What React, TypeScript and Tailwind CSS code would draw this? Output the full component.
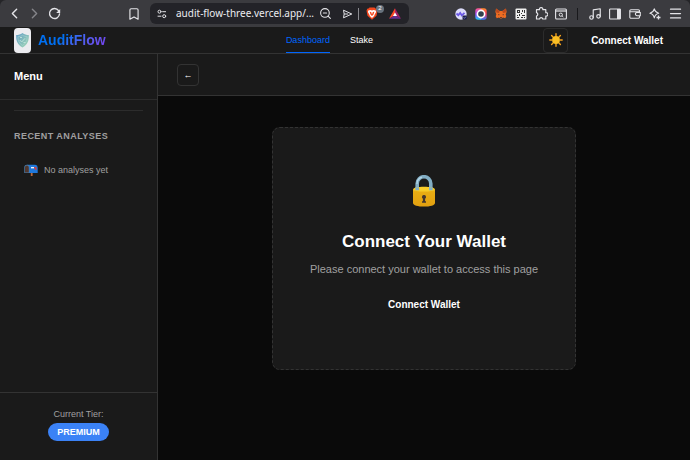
import type { ReactNode } from "react";
import { Bookmark, ChevronLeft, ChevronRight, Menu, Music, ZoomOut } from "lucide-react";

const NAV_LINKS = [
  { label: "Dashboard", active: true },
  { label: "Stake", active: false },
];

function ToolButton({ label, children }: { label: string; children: ReactNode }) {
  return (
    <button aria-label={label} className="flex h-5 w-5 shrink-0 items-center justify-center text-[#e4e4e8]">
      {children}
    </button>
  );
}

function ReloadIcon() {
  return (
    <svg width="13" height="13" viewBox="0 0 13 13" fill="none">
      <path d="M10.6 3.6A5 5 0 1 0 11.5 7" stroke="currentColor" strokeWidth="1.4" strokeLinecap="round" />
      <path d="M12.2 2v4H8.2z" fill="currentColor" />
    </svg>
  );
}

function TuneIcon() {
  return (
    <svg width="10" height="10" viewBox="0 0 10 10" fill="none" stroke="currentColor" strokeWidth="1" strokeLinecap="round">
      <circle cx="2.5" cy="2.7" r="1.5" />
      <path d="M5.6 2.7h3M1 7.2h3" />
      <circle cx="7.2" cy="7.2" r="1.5" />
    </svg>
  );
}

function SendIcon() {
  return (
    <svg width="11" height="10" viewBox="0 0 11 10" fill="none" stroke="currentColor" strokeWidth="1" strokeLinejoin="round">
      <path d="M1.5 1.2 9.8 5 1.5 8.8 2.2 5z" />
      <path d="M2.2 5h4" />
    </svg>
  );
}

function BraveIcon() {
  return (
    <svg width="12" height="13" viewBox="0 0 12 13">
      <path d="M3.5.5h5l1 1 1.3.2.7 2-1 5L6 12.7 1.5 8.7l-1-5 .7-2 1.3-.2z" fill="#f4481e" />
      <path d="M2.3 3.5 4.5 3 6 3.5 7.5 3l2.2.5.4 1.5-1.4 2.4-.6 1.6L6 10.9 3.9 9l-.6-1.6L1.9 5z" fill="#fff" />
      <path d="M3.6 4.8 5.2 5 6 7.6 6.8 5l1.6-.2-.9 2.7L6 9 4.5 7.5z" fill="#f4481e" />
    </svg>
  );
}

function RewardsIcon() {
  return (
    <svg width="12" height="11" viewBox="0 0 12 11">
      <path d="M6 .3 0 10.7l6-3.5z" fill="#ff4724" />
      <path d="M6 .3 12 10.7 6 7.2z" fill="#9e1f63" />
      <path d="M0 10.7h12L6 7.2z" fill="#662d91" />
      <path d="M6 4.5 4 8h4z" fill="#fff" />
    </svg>
  );
}

function RabbyIcon() {
  return (
    <svg width="12" height="12" viewBox="0 0 12 12">
      <circle cx="6" cy="6" r="5.7" fill="#dcdcfb" />
      <path d="M1.5 5.5 3.3 7.2 5.2 5l1.6 2.3L9.5 4.8" fill="none" stroke="#6a57e6" strokeWidth="1.8" />
      <rect x="7.5" y="7.5" width="4.3" height="4" rx="1" fill="#1f1f4a" />
      <path d="m8.5 9.5 1 .8 1.3-1.6" fill="none" stroke="#7f90ee" strokeWidth=".7" />
    </svg>
  );
}

function RainbowIcon() {
  return (
    <svg width="12" height="12" viewBox="0 0 12 12">
      <defs>
        <linearGradient id="ringLeft" x1="0" y1="0" x2="0" y2="1">
          <stop offset="0" stopColor="#ff5a8a" />
          <stop offset=".5" stopColor="#a14cff" />
          <stop offset="1" stopColor="#19c8f5" />
        </linearGradient>
        <linearGradient id="ringRight" x1="0" y1="0" x2="0" y2="1">
          <stop offset="0" stopColor="#ff8a2b" />
          <stop offset=".5" stopColor="#ff3c6e" />
          <stop offset="1" stopColor="#2f7bff" />
        </linearGradient>
      </defs>
      <path d="M6 .3H3A2.7 2.7 0 0 0 .3 3v6A2.7 2.7 0 0 0 3 11.7h3z" fill="url(#ringLeft)" />
      <path d="M6 .3h3A2.7 2.7 0 0 1 11.7 3v6A2.7 2.7 0 0 1 9 11.7H6z" fill="url(#ringRight)" />
      <circle cx="6" cy="6" r="4.4" fill="#fff" />
      <circle cx="6" cy="6" r="2.8" fill="#30404c" />
    </svg>
  );
}

function FoxIcon() {
  return (
    <svg width="12" height="11" viewBox="0 0 12 11">
      <path d="M1 .5 4.7 3h2.6L11 .5l.6 3.5-.9 2.3.6 2-1 1.9-2.3-.6-1.4 1H5.4L4 9.6l-2.3.6-1-1.9.6-2L.4 4z" fill="#ec6c22" />
      <path d="M1 .5 4.7 3 4 5 1.2 4.5zM11 .5 7.3 3 8 5l2.8-.5z" fill="#b9481d" />
      <path d="m3.4 6 1.4 1-1.4.2zM8.6 6 7.200 7l1.400.2zM5.200 9.200h1.600l.2.900H5z" fill="#2b2630" />
    </svg>
  );
}

function QrIcon() {
  return (
    <svg width="12" height="12" viewBox="0 0 12 12">
      <rect x=".5" y=".5" width="11" height="11" rx="1" fill="#f0f0f0" />
      <path d="M2 2h3v3H2zM7 2h1v2H7zM9 2h1v3H9zM2 7h1v1H2zM4 6h1v2H4zM6 5h1v1H6zM7 7h3v1H7zM6 9h2v1H6zM9 9h1v1H9zM2 9h2v1H2z" fill="#333" />
      <path d="M3 3h1v1H3z" fill="#f0f0f0" />
    </svg>
  );
}

function PuzzleIcon() {
  return (
    <svg width="13" height="13" viewBox="0 0 13 13" fill="none" stroke="currentColor" strokeWidth="1.2" strokeLinejoin="round">
      <path d="M1.5 2.700h3a1.700 1.700 0 1 1 3.300 0h3v3a1.700 1.700 0 1 1 0 3.300v3h-3a1.700 1.700 0 0 0-3.300 0h-3v-3a1.700 1.700 0 0 0 0-3.300z" />
    </svg>
  );
}

function WindowSearchIcon() {
  return (
    <svg width="12" height="12" viewBox="0 0 12 12" fill="none" stroke="currentColor">
      <rect x=".6" y="1" width="10.8" height="10" rx="1" strokeWidth="1.1" />
      <path d="M1 3h10" strokeWidth="1.2" />
      <circle cx="5.8" cy="6.7" r="1.6" />
      <path d="m7 7.8 1.3 1.2" />
    </svg>
  );
}

function SidePanelIcon() {
  return (
    <svg width="12" height="12" viewBox="0 0 12 12" fill="none">
      <rect x=".6" y="1" width="10.8" height="10" rx=".8" stroke="currentColor" strokeWidth="1.1" />
      <path d="M8 1h3.500v10H8z" fill="currentColor" />
    </svg>
  );
}

function WalletIcon() {
  return (
    <svg width="12" height="12" viewBox="0 0 12 12" fill="none" stroke="currentColor" strokeWidth="1.1">
      <path d="M10.5 4V3a1.200 1.200 0 0 0-1.200-1.300H2A1.200 1.200 0 0 0 .8 3v6A1.200 1.200 0 0 0 2 10.300h7.300A1.200 1.200 0 0 0 10.500 9V8" />
      <path d="M.8 3.700h9.700M11.300 4.500H8a1.600 1.600 0 0 0 0 3.200h3.300z" />
    </svg>
  );
}

function SparkleIcon() {
  return (
    <svg width="12" height="12" viewBox="0 0 12 12" fill="none" stroke="currentColor" strokeLinejoin="round">
      <path d="M5.3.9C5.9 3.5 6.700 4.500 9.700 5.300 6.700 6.100 5.900 7.100 5.300 9.900 4.700 7.100 3.900 6.100.9 5.300 3.900 4.500 4.700 3.500 5.300.9z" strokeWidth="1.1" />
      <path d="M9.500 7.500v4M7.500 9.500h4" strokeWidth="1.300" />
    </svg>
  );
}

function ShieldLogo() {
  return (
    <svg className="h-[25px] w-[17px]" viewBox="0 0 17 25">
      <defs>
        <linearGradient id="shield" x1="0" y1="0" x2="1" y2="1">
          <stop offset="0" stopColor="#5f9bc6" />
          <stop offset="1" stopColor="#a6dcb4" />
        </linearGradient>
      </defs>
      <rect width="17" height="25" rx="4" fill="#ececf0" />
      <path d="M8.500 5c2 1.500 4 2 6.300 2 .3 6-1.500 10-6.300 12.500C3.700 17 1.900 13 2.200 7c2.300 0 4.300-.5 6.300-2z" fill="url(#shield)" />
      <path d="M8.500 7.200c1.500 1 3 1.400 4.600 1.500 0 4-1.300 6.700-4.600 8.700-3.300-2-4.600-4.700-4.600-8.700 1.600-.1 3.100-.5 4.600-1.500z" fill="none" stroke="#a9d3d3" strokeWidth=".6" />
      <path d="m5.700 12 2 2 3.300-3.700M6 9.500h2M9.500 14.500h2" fill="none" stroke="#c3e5da" strokeWidth=".9" />
    </svg>
  );
}

function SunIcon() {
  return (
    <svg width="14" height="14" viewBox="0 0 14 14">
      <path
        d="M7 .8v2M7 11.200v2M.8 7h2M11.200 7h2M2.600 2.600 4 4M10 10l1.400 1.400M2.600 11.400 4 10M10 4l1.400-1.400"
        stroke="#f5a11c"
        strokeWidth="1.400"
        strokeLinecap="round"
      />
      <circle cx="7" cy="7" r="3.900" fill="#fbbf24" />
    </svg>
  );
}

function MailboxIcon() {
  return (
    <svg width="14" height="12" viewBox="0 0 14 12">
      <path d="M6.800 8.500h1.800V12H6.800z" fill="#b4683c" />
      <path d="M3 .8h8.200A2.600 2.600 0 0 1 13.700 3.400V9H3z" fill="#1f78dc" />
      <path d="M.3 9V3.400a2.600 2.600 0 0 1 5.200 0V9z" fill="#4a7fae" />
      <path d="M1 8.400V3.500a1.900 1.900 0 0 1 3.800 0v4.900z" fill="#51382f" />
      <path d="M7 3h3v1.400H7z" fill="#f2f4f7" />
      <path d="M10 3.200h2.500v2.600H11V4.500h-1z" fill="#e53935" />
    </svg>
  );
}

function LockIcon() {
  return (
    <svg width="24" height="32" viewBox="0 0 24 32">
      <defs>
        <linearGradient id="lockBody" x1="0" y1="0" x2="0" y2="1">
          <stop offset="0" stopColor="#fbd02c" />
          <stop offset=".25" stopColor="#e9ad13" />
          <stop offset="1" stopColor="#e2a010" />
        </linearGradient>
      </defs>
      <path d="M5.200 16V8.500a6.800 6.800 0 0 1 13.600 0V16" fill="none" stroke="#82aec4" strokeWidth="3.600" />
      <path d="M5 9a7 7 0 0 1 5-6.800" fill="none" stroke="#b4d6e6" strokeWidth="1.300" />
      <path d="M1 15c0-2.500 5-3.200 11-3.200S23 12.500 23 15v13c0 2.500-5 3.600-11 3.600S1 30.500 1 28z" fill="url(#lockBody)" />
      <path d="M1.500 14.500c0-1.700 5-2.400 10.500-2.400s10.500.7 10.500 2.400c0 1.500-5 2.100-10.500 2.100s-10.500-.6-10.500-2.100z" fill="#f8cc28" />
      <path d="M3.400 12.300H7v3H3.400zM17 12.300h3.600v3H17z" fill="#82aec4" />
      <path d="M12 20a2 2 0 0 1 1.100 3.700v2.600h.9v1.400h-4v-1.400h.9v-2.600A2 2 0 0 1 12 20z" fill="#44362c" />
    </svg>
  );
}

function BrowserBar() {
  return (
    <div className="bg-[#252528]">
      <div className="flex h-[27px] items-center rounded-t-md bg-[#3b3b3f] pr-[5px] pl-1">
        <ToolButton label="Back"><ChevronLeft size={17} strokeWidth={2} /></ToolButton>
        <ToolButton label="Forward"><ChevronRight size={17} strokeWidth={2} className="text-[#85858a]" /></ToolButton>
        <ToolButton label="Reload"><ReloadIcon /></ToolButton>
        <div className="ml-[60px] flex">
          <ToolButton label="Bookmark"><Bookmark size={14} strokeWidth={2} /></ToolButton>
        </div>
        <div className="ml-[6px] flex h-[21px] min-w-0 flex-1 items-center rounded-md bg-[#232328] px-[2px]">
          <ToolButton label="Site settings"><TuneIcon /></ToolButton>
          <input
            aria-label="Address"
            readOnly
            value="audit-flow-three.vercel.app/..."
            className="ml-[4px] min-w-0 flex-1 bg-transparent font-['Noto_Sans',sans-serif] text-[10px] text-[#ececf0] outline-none"
          />
          <ToolButton label="Zoom"><ZoomOut size={13} strokeWidth={2} /></ToolButton>
          <div className="ml-[2px] flex"><ToolButton label="Share"><SendIcon /></ToolButton></div>
          <span className="mx-[1px] h-3 w-px bg-[#8b8b90]" />
          <button aria-label="Shields" className="relative ml-[2px] flex h-5 w-5 items-center justify-center">
            <BraveIcon />
            <span className="absolute top-[1px] right-[-2px] flex h-2 w-2 items-center justify-center rounded-full bg-[#68727d] text-[6px] text-white">2</span>
          </button>
          <div className="mr-[2px] ml-[3px] flex"><ToolButton label="Rewards"><RewardsIcon /></ToolButton></div>
        </div>
        <div className="ml-[42px] flex items-center">
          <ToolButton label="Rabby"><RabbyIcon /></ToolButton>
          <ToolButton label="Rainbow"><RainbowIcon /></ToolButton>
          <ToolButton label="MetaMask"><FoxIcon /></ToolButton>
          <ToolButton label="QR code"><QrIcon /></ToolButton>
          <ToolButton label="Extensions"><PuzzleIcon /></ToolButton>
          <ToolButton label="Search tabs"><WindowSearchIcon /></ToolButton>
          <span className="mr-[7px] ml-[6px] h-3 w-px bg-[#19191c]" />
          <ToolButton label="Media"><Music size={14} strokeWidth={2} /></ToolButton>
          <ToolButton label="Side panel"><SidePanelIcon /></ToolButton>
          <ToolButton label="Wallet"><WalletIcon /></ToolButton>
          <ToolButton label="Assistant"><SparkleIcon /></ToolButton>
          <ToolButton label="Menu"><Menu size={15} strokeWidth={2} /></ToolButton>
        </div>
      </div>
    </div>
  );
}

function Header() {
  return (
    <header className="flex h-[27px] items-center justify-between border-b border-[#333] bg-[#1a1a1a] px-[14px]">
      <a href="#" className="flex items-center gap-[7px]">
        <ShieldLogo />
        <span className="bg-linear-135 from-[#0070f3] from-40% to-[#7c3aed] bg-clip-text text-[14px] font-bold text-transparent">AuditFlow</span>
      </a>
      <nav className="flex h-full gap-5 pl-[10px] text-[9px]">
        {NAV_LINKS.map((link) => (
          <a
            key={link.label}
            href="#"
            className={link.active ? "flex h-full items-center border-b border-[#0066ff] pt-[2px] text-[#0066ff]" : "flex h-full items-center border-b border-transparent pt-[2px]"}
          >
            {link.label}
          </a>
        ))}
      </nav>
      <div className="flex items-center gap-[10px]">
        <button aria-label="Toggle theme" className="flex h-[25px] w-[25px] items-center justify-center rounded-[4px] border border-[#2c2c2c]">
          <SunIcon />
        </button>
        <button className="px-[13px] text-[10px] font-bold">Connect Wallet</button>
      </div>
    </header>
  );
}

function Sidebar() {
  return (
    <aside className="flex w-[158px] shrink-0 flex-col border-r border-[#333] bg-[#1a1a1a]">
      <h2 className="flex h-[46px] items-center border-b border-[#2c2c2c] px-[14px] text-[11px] font-bold">Menu</h2>
      <div className="flex-1 px-[14px] pt-[10px]">
        <hr className="border-[#2c2c2c]" />
        <h3 className="mt-[19px] text-[9px] leading-3 font-bold tracking-wider text-[#a0a0a0]">RECENT ANALYSES</h3>
        <div className="mt-[20px] flex items-center gap-[6px] pl-[10px] text-[9px] leading-4 text-[#a0a0a0]">
          <MailboxIcon />
          <span>No analyses yet</span>
        </div>
      </div>
      <div className="flex h-[68px] flex-col items-center border-t border-[#333] pt-[15px] text-[9px]">
        <span className="leading-3 text-[#a0a0a0]">Current Tier:</span>
        <span className="mt-[3px] rounded-full bg-[#3b82f6] px-[9px] leading-[18px] font-bold">PREMIUM</span>
      </div>
    </aside>
  );
}

export default function App() {
  return (
    <div className="flex min-h-screen flex-col bg-[#0a0a0a] font-['Liberation_Sans',Arial,sans-serif] text-white">
      <BrowserBar />
      <Header />
      <div className="flex flex-1">
        <Sidebar />
        <main className="min-w-0 flex-1">
          <div className="flex h-[42px] items-center border-b border-[#333] bg-[#1a1a1a] px-[19px]">
            <button aria-label="Back" className="flex h-[22px] w-[22px] items-center justify-center rounded-[4px] border border-[#333] text-[9px] leading-3">
              ←
            </button>
          </div>
          <div className="flex justify-center px-5 pt-[31px]">
            <section className="flex w-full max-w-[304px] flex-col items-center rounded-[8px] border border-dashed border-[#333] bg-[#1a1a1a] pt-[47px] pb-[58px]">
              <LockIcon />
              <h1 className="mt-[25px] text-[17px] leading-5 font-bold">Connect Your Wallet</h1>
              <p className="mt-[9px] text-[11px] leading-4 text-[#a0a0a0]">Please connect your wallet to access this page</p>
              <button className="mt-[22px] text-[10px] leading-3 font-bold">Connect Wallet</button>
            </section>
          </div>
        </main>
      </div>
    </div>
  );
}
